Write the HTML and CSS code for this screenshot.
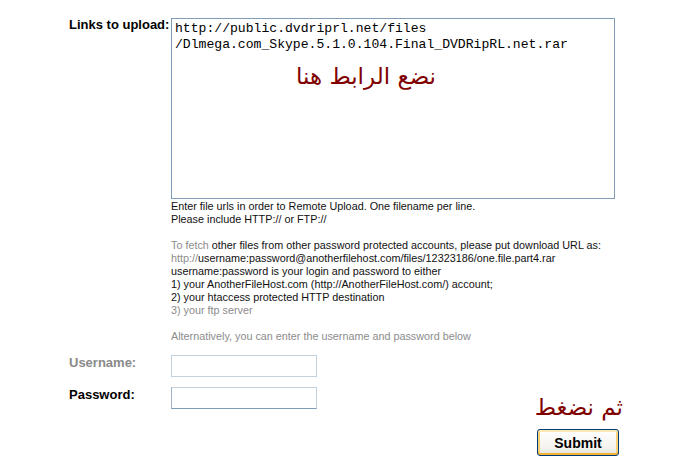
FILE: index.html
```html
<!DOCTYPE html>
<html>
<head>
<meta charset="utf-8">
<link rel="stylesheet" href="styles.css">
</head>
<body>
<form class="upload">
  <div class="row">
    <label class="label">Links to upload:</label>
    <div class="field">
      <div class="area-wrap">
        <textarea class="links">http://public.dvdriprl.net/files
/Dlmega.com_Skype.5.1.0.104.Final_DVDRipRL.net.rar</textarea>
        <span class="note note-paste" dir="rtl">نضع الرابط هنا</span>
      </div>
      <div class="help">
        <p>Enter file urls in order to Remote Upload. One filename per line.<br>Please include HTTP:// or FTP://</p>
        <p><span class="faded">To fetch</span> other files from other password protected accounts, please put download URL as:<br><span class="faded">http://</span>username:password@anotherfilehost.com/files/12323186/one.file.part4.rar<br>username:password is your login and password to either<br>1) your AnotherFileHost.com (http://AnotherFileHost.com/) account;<br>2) your htaccess protected HTTP destination<br><span class="faded">3) your ftp server</span></p>
        <p class="faded">Alternatively, you can enter the username and password below</p>
      </div>
    </div>
  </div>
  <div class="row row-user">
    <label class="label label-muted">Username:</label>
    <div class="field"><input class="box box-light" type="text"></div>
  </div>
  <div class="row row-pass">
    <label class="label">Password:</label>
    <div class="field"><input class="box" type="password"></div>
  </div>
  <div class="row row-submit">
    <span class="label"></span>
    <div class="field submit-col">
      <span class="note note-click" dir="rtl">ثم نضغط</span>
      <button class="submit" type="button">Submit</button>
    </div>
  </div>
</form>
</body>
</html>
```

FILE: styles.css
```css
html, body {
  margin: 0;
  padding: 0;
  background: #fff;
}
body {
  font-family: "Liberation Sans", Arial, sans-serif;
  color: #000;
}
.upload {
  padding: 17px 0 0 69px;
}
.row {
  display: grid;
  grid-template-columns: 102px 448px;
  align-items: start;
}
.label {
  font-weight: bold;
  font-size: 13px;
  line-height: 16px;
  color: #000;
}
.label-muted {
  color: #8a8a8a;
}
.area-wrap {
  position: relative;
  width: 444px;
  margin-top: 1px;
}
.links {
  display: block;
  box-sizing: border-box;
  width: 444px;
  height: 181px;
  margin: 0;
  padding: 2px 3px;
  border: 1px solid #7f9db9;
  font-family: "Liberation Mono", "Courier New", monospace;
  font-size: 13.1px;
  line-height: 16px;
  color: #000;
  resize: none;
  outline: none;
  overflow: hidden;
  white-space: pre;
}
.note {
  font-family: "DejaVu Sans", sans-serif;
  color: #800000;
  font-size: 23px;
  line-height: 28px;
}
.note-paste {
  position: absolute;
  left: 125px;
  top: 44px;
}
.help {
  font-size: 10.8px;
  line-height: 13px;
  color: #111;
  padding-top: 1px;
}
.help p {
  margin: 0 0 13px 0;
}
.help p:last-child {
  margin-bottom: 0;
}
.faded {
  color: #8c8c8c;
}
.row-user {
  margin-top: 12px;
}
.row-pass {
  margin-top: 10px;
}
.box {
  display: block;
  box-sizing: border-box;
  width: 146px;
  height: 22px;
  margin: 0;
  border: 1px solid #c3d0dd;
  border-bottom-color: #7f9db9;
  border-left-color: #9fb5c9;
  background: #fff;
  outline: none;
}
.box-light {
  border-color: #c3d1de;
}
.row-submit {
  margin-top: -16px;
}
.submit-col {
  display: flex;
  flex-direction: column;
  align-items: flex-end;
}
.note-click {
  display: block;
  margin: 0 -4px 0 0;
}
.submit {
  margin-top: 8px;
  width: 82px;
  height: 27px;
  box-sizing: border-box;
  border: 1px solid #003c74;
  border-radius: 3px;
  background: linear-gradient(#ffffff, #f4f3ee 70%, #e3e1d6);
  box-shadow: inset 0 -2px 0 #f5b435, inset 0 2px 0 #ffe9b5, inset 2px 0 0 #fbd178, inset -2px 0 0 #fbd178;
  font-family: "Liberation Sans", Arial, sans-serif;
  font-weight: bold;
  font-size: 14px;
  color: #000;
  padding: 0;
}
```
